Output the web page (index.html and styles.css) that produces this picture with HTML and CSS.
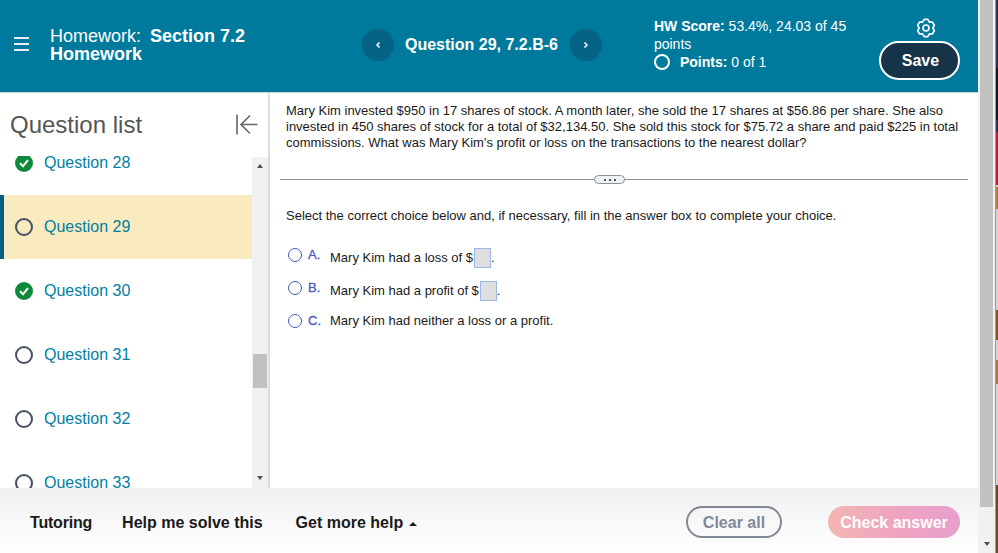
FILE: index.html
```html
<!DOCTYPE html>
<html lang="en">
<head>
<meta charset="utf-8">
<title>Homework</title>
<link rel="stylesheet" href="styles.css">
</head>
<body>
<div class="page">
  <div class="app">
    <header class="header">
      <button class="menu" aria-label="Menu"><span></span><span></span><span></span></button>
      <div class="title">Homework:&nbsp;<span class="gap"></span><b>Section 7.2 Homework</b></div>
      <nav class="qnav">
        <span class="circle"><svg width="8" height="10" viewBox="0 0 8 10"><path d="M5.5 2.4 L3 5 L5.5 7.6" fill="none" stroke="#fff" stroke-width="1.5"/></svg></span>
        <span class="qname">Question 29, 7.2.B-6</span>
        <span class="circle"><svg width="8" height="10" viewBox="0 0 8 10"><path d="M2.5 2.4 L5 5 L2.5 7.6" fill="none" stroke="#fff" stroke-width="1.5"/></svg></span>
      </nav>
      <div class="score">
        <div><b>HW Score:</b> 53.4%, 24.03 of 45</div>
        <div>points</div>
        <div class="points"><span class="ring"></span><span><b>Points:</b> 0 of 1</span></div>
      </div>
      <div class="actions">
        <svg class="gear" width="20" height="20" viewBox="0 0 24 24" fill="none" stroke="#fff" stroke-width="2" stroke-linejoin="round"><path d="M9.8 1.7 H14.2 L16.1 4.9 L19.8 5 L22 8.75 L20.2 12 L22 15.25 L19.8 19 L16.1 19.1 L14.2 22.3 H9.8 L7.9 19.1 L4.2 19 L2 15.25 L3.8 12 L2 8.75 L4.2 5 L7.9 4.9 Z"/><circle cx="12" cy="12" r="3.6"/></svg>
        <button class="save">Save</button>
      </div>
    </header>
    <main class="main">
      <aside class="side">
        <div class="side-head">
          <h2>Question list</h2>
          <svg width="22" height="21" viewBox="0 0 22 21" fill="none" stroke="#666" stroke-width="1.6"><path d="M1 0.5 V20.5 M21.5 10.5 H5 M14 1.5 L5 10.5 L14 19.5"/></svg>
        </div>
        <div class="list-wrap">
          <ul class="list">
            <li class="item"><svg class="ic" width="18" height="18" viewBox="0 0 18 18"><circle cx="9" cy="9" r="9" fill="#0f8a3c"/><path d="M5 9.3 L8 12.2 L13 6.2" fill="none" stroke="#fff" stroke-width="2"/></svg>Question 28</li>
            <li class="item current"><span class="open"></span>Question 29</li>
            <li class="item"><svg class="ic" width="18" height="18" viewBox="0 0 18 18"><circle cx="9" cy="9" r="9" fill="#0f8a3c"/><path d="M5 9.3 L8 12.2 L13 6.2" fill="none" stroke="#fff" stroke-width="2"/></svg>Question 30</li>
            <li class="item"><span class="open"></span>Question 31</li>
            <li class="item"><span class="open"></span>Question 32</li>
            <li class="item"><span class="open"></span>Question 33</li>
          </ul>
          <div class="side-scroll">
            <span class="up"></span>
            <span class="thumb"></span>
            <span class="down"></span>
          </div>
        </div>
      </aside>
      <section class="content">
        <p class="stem">Mary Kim invested $950 in 17 shares of stock. A month later, she sold the 17 shares at $56.86 per share. She also invested in 450 shares of stock for a total of $32,134.50. She sold this stock for $75.72 a share and paid $225 in total commissions. What was Mary Kim's profit or loss on the transactions to the nearest dollar?</p>
        <div class="divider"><span class="handle"><i></i><i></i><i></i></span></div>
        <p class="prompt">Select the correct choice below and, if necessary, fill in the answer box to complete your choice.</p>
        <div class="choice"><span class="radio"></span><b>A.</b><span class="ctext">Mary Kim had a loss of $<i class="box"></i>.</span></div>
        <div class="choice"><span class="radio"></span><b>B.</b><span class="ctext">Mary Kim had a profit of $<i class="box"></i>.</span></div>
        <div class="choice"><span class="radio"></span><b>C.</b><span class="ctext plain">Mary Kim had neither a loss or a profit.</span></div>
      </section>
    </main>
    <footer class="footer">
      <a class="help first">Tutoring</a>
      <a class="help second">Help me solve this</a>
      <a class="help third">Get more help <span class="caret"></span></a>
      <button class="clear">Clear all</button>
      <button class="check">Check answer</button>
    </footer>
  </div>
  <div class="page-scroll">
    <span class="thumb-main"></span>
    <span class="down"></span>
  </div>
  <div class="sliver">
    <span class="s1"></span><span class="s2"></span><span class="s3"></span><span class="s4"></span><span class="s5"></span><span class="s6"></span><span class="s7"></span><span class="s8"></span><span class="s9"></span><span class="s10"></span><span class="s11"></span>
  </div>
</div>
</body>
</html>
```

FILE: styles.css
```css
* { box-sizing: border-box; }
html, body { margin: 0; height: 100%; }
body { font-family: "Liberation Sans", Arial, sans-serif; overflow: hidden; background: #fff; }
button { font-family: inherit; border: 0; padding: 0; }
.page { display: flex; width: 998px; height: 553px; }
.app { width: 978px; height: 553px; display: flex; flex-direction: column; background: #fff; }

.header { height: 93px; flex: none; background: #007a9c; border-bottom: 1px solid #c9d6dc; color: #fff; display: flex; align-items: flex-start; }
.menu { width: 15px; margin: 37px 0 0 14px; background: none; display: flex; flex-direction: column; gap: 4px; flex: none; }
.menu span { display: block; height: 2px; background: #e4f0f4; }
.title { width: 230px; margin: 27px 0 0 21px; font-size: 18px; line-height: 18px; flex: none; }
.gap { display: inline-block; width: 4px; }
.qnav { display: flex; align-items: center; margin: 29px 0 0 82px; flex: none; }
.circle { width: 32px; height: 32px; border-radius: 50%; background: #066385; display: flex; align-items: center; justify-content: center; }
.qname { font-size: 16px; font-weight: bold; margin: 0 12px 0 11px; }
.score { width: 225px; margin: 17px 0 0 52px; font-size: 14px; line-height: 18px; flex: none; }
.points { display: flex; align-items: center; gap: 10px; }
.ring { width: 16px; height: 16px; border: 2px solid #fff; border-radius: 50%; }
.actions { width: 81px; display: flex; flex-direction: column; align-items: flex-start; margin-top: 18px; flex: none; }
.gear { margin-left: 37px; }
.save { width: 81px; height: 39px; margin-top: 3px; border: 2px solid #fff; border-radius: 20px; background: #173347; color: #fff; font-size: 16px; font-weight: bold; padding: 0 0 0 2px; }

.main { flex: 1; display: flex; min-height: 0; }
.side { width: 270px; flex: none; border-right: 2px solid #dcdce2; display: flex; flex-direction: column; }
.side-head { height: 63px; flex: none; display: flex; align-items: center; justify-content: space-between; padding: 0 10px 0 10px; }
.side-head h2 { margin: 0; font-size: 24px; font-weight: normal; color: #555; }
.list-wrap { flex: 1; display: flex; overflow: hidden; min-height: 0; }
.list { list-style: none; margin: -25px 0 0; padding: 0; width: 252px; flex: none; }
.item { height: 64px; display: flex; align-items: center; padding: 0 0 1px 15px; font-size: 16px; color: #007fa3; }
.item .ic { margin: 1px 11px 0 0; flex: none; }
.current { background: #f9ebbf; border-left: 4px solid #005f7d; padding-left: 11px; }
.open { width: 18px; height: 18px; border: 2px solid #46505f; border-radius: 50%; margin: 1px 11px 0 0; flex: none; }
.side-scroll { width: 16px; margin-top: 1px; background: #f1f1f1; display: flex; flex-direction: column; align-items: center; }
.up { margin-top: 7px; border: 3.5px solid transparent; border-top: 0; border-bottom: 4px solid #505050; }
.thumb { width: 14px; height: 34px; margin-top: 186px; background: #c1c1c1; }
.side-scroll .down { margin-top: 88px; }
.down { border: 3.5px solid transparent; border-bottom: 0; border-top: 4px solid #505050; }

.content { flex: 1; padding: 10px 10px 0 10px; font-size: 13px; color: #1a1a1a; min-width: 0; }
.stem { margin: 0 0 0 6px; line-height: 16px; width: 680px; }
.divider { height: 1px; background: #8d8f9c; margin-top: 28px; position: relative; width: 688px; }
.handle { position: absolute; left: 314px; top: -4px; width: 31px; height: 9px; border: 1px solid #8d8f9c; border-radius: 5px; background: #eef1f5; display: flex; align-items: center; justify-content: center; gap: 3px; }
.handle i { width: 2px; height: 2px; background: #555; }
.prompt { margin: 29px 0 25px 6px; line-height: 14px; }
.choice { display: flex; align-items: flex-start; height: 33px; margin-left: 8px; }
.radio { width: 14px; height: 14px; border: 1.5px solid #3f5bb5; border-radius: 50%; flex: none; }
.choice b { width: 28px; padding-left: 6px; font-size: 13px; font-weight: normal; -webkit-text-stroke: 0.3px #4a57c0; color: #4a57c0; flex: none; line-height: 14px; }
.ctext { display: flex; align-items: center; line-height: 14px; height: 14px; margin-top: 3px; }
.plain { margin-top: 0; }
.box { width: 17px; height: 20px; margin-left: 1px; background: #dedede; border: 1px solid #9db7e8; display: block; }

.footer { height: 65px; flex: none; display: flex; align-items: flex-start; background: linear-gradient(#f0f0f0, #fff); }
.help { font-size: 16px; color: #1a1a1a; margin-top: 26px; line-height: 18px; font-weight: 700; }
.first { margin-left: 30px; letter-spacing: -0.2px; }
.second { margin-left: 30px; }
.third { margin-left: 33px; }
.caret { display: inline-block; vertical-align: middle; border: 4px solid transparent; border-top: 0; border-bottom: 4px solid #1a1a1a; margin-left: 1px; }
.clear { width: 96px; height: 32px; margin: 18px 0 0 auto; border: 2px solid #838898; border-radius: 16px; background: transparent; color: #838898; font-size: 16px; font-weight: bold; padding-top: 1px; }
.check { width: 132px; height: 32px; margin: 18px 18px 0 46px; border-radius: 16px; background: linear-gradient(90deg, #f4b6b0, #efa3c3 55%, #e79fcb); color: #fff; font-size: 16px; font-weight: bold; padding-top: 1px; }

.page-scroll { width: 17px; height: 553px; flex: none; background: #f1f1f1; display: flex; flex-direction: column; align-items: center; }
.thumb-main { width: 13px; height: 507px; background: #c1c1c1; }
.page-scroll .down { margin-top: 35px; }
.sliver { width: 3px; flex: none; display: flex; flex-direction: column; border-left: 1px solid #9a9a9a; background: #d4d4d4; }
.sliver span { display: block; flex: none; }
.s1 { height: 68px; background: #2a3350; }
.s2 { height: 52px; background: #161a28; }
.s3 { height: 12px; background: #2a3350; }
.s4 { height: 53px; background: #c21d3c; }
.s5 { height: 2px; background: #d4d4d4; }
.s6 { height: 22px; background: #b0803a; }
.s7 { height: 101px; background: #d4d4d4; }
.s8 { height: 30px; background: #8a5a20; }
.s9 { height: 20px; background: #d4d4d4; }
.s10 { height: 24px; background: #a87a38; }
.s11 { height: 169px; background: linear-gradient(#d4d4d4 0 60%, #6b4a2a 60%); }
```
